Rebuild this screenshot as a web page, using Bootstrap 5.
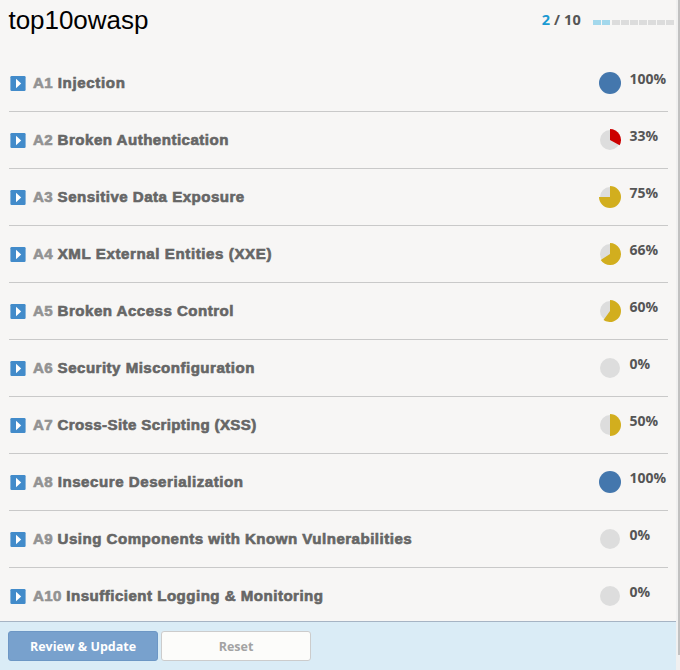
<!DOCTYPE html>
<html lang="en">
<head>
<meta charset="utf-8">
<meta name="viewport" content="width=device-width, initial-scale=1">
<title>top10owasp</title>
<link href="https://cdn.jsdelivr.net/npm/bootstrap@5.3.0/dist/css/bootstrap.min.css" rel="stylesheet">
<style>
body{background:#f7f6f5;font-family:"Open Sans",sans-serif;height:670px}
.pane{width:676px}
.top-bar{height:55px;padding:0 2px 0 8.5px}
.top-bar h1{font:400 26px/30px "Liberation Sans",Arial,sans-serif;color:#000;margin-top:5px;letter-spacing:-.04px}
.count{font-size:14.5px;line-height:20px;color:#555;margin:10px 12px 0 0;letter-spacing:.15px}
.count span{color:#1b9ad2}
.steps{gap:1px;margin-top:20px}
.steps i{width:8px;height:5px;background:#dcdcdc}
.steps .done{background:#a3d8ec}
.steps .done + i:not(.done){margin-left:1px}
.topics{padding:0 8px 0 9px;height:566px;overflow:hidden}
.topic{height:57px;border-bottom:1px solid #c9c9c9;padding-left:1px}
.topic:last-child{border-color:transparent}
.caret{width:16px;height:15px;margin-right:6.5px}
.label{font:700 14px/20px "Liberation Sans",Arial,sans-serif;color:#666;letter-spacing:.45px;-webkit-text-stroke:.6px currentColor;white-space:nowrap;transform:scaleX(1.077);transform-origin:left}
.label span{color:#929292;letter-spacing:.3px}
.topic:nth-child(1) .label{letter-spacing:.6px}
.topic:nth-child(4) .label{letter-spacing:.55px}
.topic:nth-child(7) .label{letter-spacing:.35px}
.topic:nth-child(8) .label{letter-spacing:.51px}
.pie{width:22px;height:22px}
.pct{width:39px;margin:-9px 0 0 8px;padding-left:.5px;font-size:14px;line-height:20px;color:#555}
.foot{height:49px;background:#daecf6;border-top:1px solid #a6b4c4;padding:9px 8px;gap:3px}
.foot .btn{width:150px;height:30px;padding:0;font-size:12.5px;font-weight:700;line-height:29px;border-radius:3px}
.btn-review{background:#78a1cd;border-color:#6d97c5;color:#fff}
.btn-reset{background:#fcfcfa;border-color:#ccc;color:#a3a3a3}
.track{width:4px;background:#f0f0f0}
.thumb{width:2px;height:655px;background:#c1c1c1}
</style>
<script src="https://cdn.jsdelivr.net/npm/bootstrap@5.3.0/dist/js/bootstrap.bundle.min.js"></script>
</head>
<body class="d-flex overflow-hidden">
<svg class="d-none">
  <symbol id="caret" viewBox="0 0 16 15"><rect x=".4" width="15.2" height="15" rx="1.2" fill="#428bca"/><path d="M6 2.7v9.6L11.2 7.5z" fill="#fff"/></symbol>
  <symbol id="pie0" viewBox="0 0 22 22"><circle cx="11" cy="11" r="10" fill="#ddd"/></symbol>
  <symbol id="pie100" viewBox="0 0 22 22"><circle cx="11" cy="11" r="11" fill="#4477ad"/></symbol>
  <symbol id="pie33" viewBox="0 0 22 22"><circle cx="11" cy="11" r="10" fill="#ddd"/><path d="M11 11V0A11 11 0 0 1 20.63 16.32z" fill="#c00"/></symbol>
  <symbol id="pie50" viewBox="0 0 22 22"><circle cx="11" cy="11" r="10" fill="#ddd"/><path d="M11 0A11 11 0 0 1 11 22z" fill="#d2ae1e"/></symbol>
  <symbol id="pie60" viewBox="0 0 22 22"><circle cx="11" cy="11" r="10" fill="#ddd"/><path d="M11 11V0A11 11 0 1 1 4.53 19.9z" fill="#d2ae1e"/></symbol>
  <symbol id="pie66" viewBox="0 0 22 22"><circle cx="11" cy="11" r="10" fill="#ddd"/><path d="M11 11V0A11 11 0 1 1 1.71 16.89z" fill="#d2ae1e"/></symbol>
  <symbol id="pie75" viewBox="0 0 22 22"><circle cx="11" cy="11" r="10" fill="#ddd"/><path d="M11 11V0A11 11 0 1 1 0 11z" fill="#d2ae1e"/></symbol>
</svg>
<main class="pane d-flex flex-column flex-shrink-0">
  <header class="top-bar d-flex align-items-start">
    <h1 class="me-auto mb-0">top10owasp</h1>
    <div class="count fw-bold"><span>2</span> / 10</div>
    <div class="steps d-flex"><i class="done"></i><i class="done"></i><i></i><i></i><i></i><i></i><i></i><i></i><i></i></div>
  </header>
  <section class="topics">
    <div class="topic d-flex align-items-center"><svg class="caret"><use href="#caret"/></svg><div class="label me-auto"><span>A1</span> Injection</div><svg class="pie"><use href="#pie100"/></svg><div class="pct fw-bold">100%</div></div>
    <div class="topic d-flex align-items-center"><svg class="caret"><use href="#caret"/></svg><div class="label me-auto"><span>A2</span> Broken Authentication</div><svg class="pie"><use href="#pie33"/></svg><div class="pct fw-bold">33%</div></div>
    <div class="topic d-flex align-items-center"><svg class="caret"><use href="#caret"/></svg><div class="label me-auto"><span>A3</span> Sensitive Data Exposure</div><svg class="pie"><use href="#pie75"/></svg><div class="pct fw-bold">75%</div></div>
    <div class="topic d-flex align-items-center"><svg class="caret"><use href="#caret"/></svg><div class="label me-auto"><span>A4</span> XML External Entities (XXE)</div><svg class="pie"><use href="#pie66"/></svg><div class="pct fw-bold">66%</div></div>
    <div class="topic d-flex align-items-center"><svg class="caret"><use href="#caret"/></svg><div class="label me-auto"><span>A5</span> Broken Access Control</div><svg class="pie"><use href="#pie60"/></svg><div class="pct fw-bold">60%</div></div>
    <div class="topic d-flex align-items-center"><svg class="caret"><use href="#caret"/></svg><div class="label me-auto"><span>A6</span> Security Misconfiguration</div><svg class="pie"><use href="#pie0"/></svg><div class="pct fw-bold">0%</div></div>
    <div class="topic d-flex align-items-center"><svg class="caret"><use href="#caret"/></svg><div class="label me-auto"><span>A7</span> Cross-Site Scripting (XSS)</div><svg class="pie"><use href="#pie50"/></svg><div class="pct fw-bold">50%</div></div>
    <div class="topic d-flex align-items-center"><svg class="caret"><use href="#caret"/></svg><div class="label me-auto"><span>A8</span> Insecure Deserialization</div><svg class="pie"><use href="#pie100"/></svg><div class="pct fw-bold">100%</div></div>
    <div class="topic d-flex align-items-center"><svg class="caret"><use href="#caret"/></svg><div class="label me-auto"><span>A9</span> Using Components with Known Vulnerabilities</div><svg class="pie"><use href="#pie0"/></svg><div class="pct fw-bold">0%</div></div>
    <div class="topic d-flex align-items-center"><svg class="caret"><use href="#caret"/></svg><div class="label me-auto"><span>A10</span> Insufficient Logging &amp; Monitoring</div><svg class="pie"><use href="#pie0"/></svg><div class="pct fw-bold">0%</div></div>
  </section>
  <footer class="foot d-flex">
    <button type="button" class="btn btn-review">Review &amp; Update</button>
    <button type="button" class="btn btn-reset">Reset</button>
  </footer>
</main>
<div class="track d-flex justify-content-end flex-shrink-0"><div class="thumb"></div></div>
</body>
</html>
